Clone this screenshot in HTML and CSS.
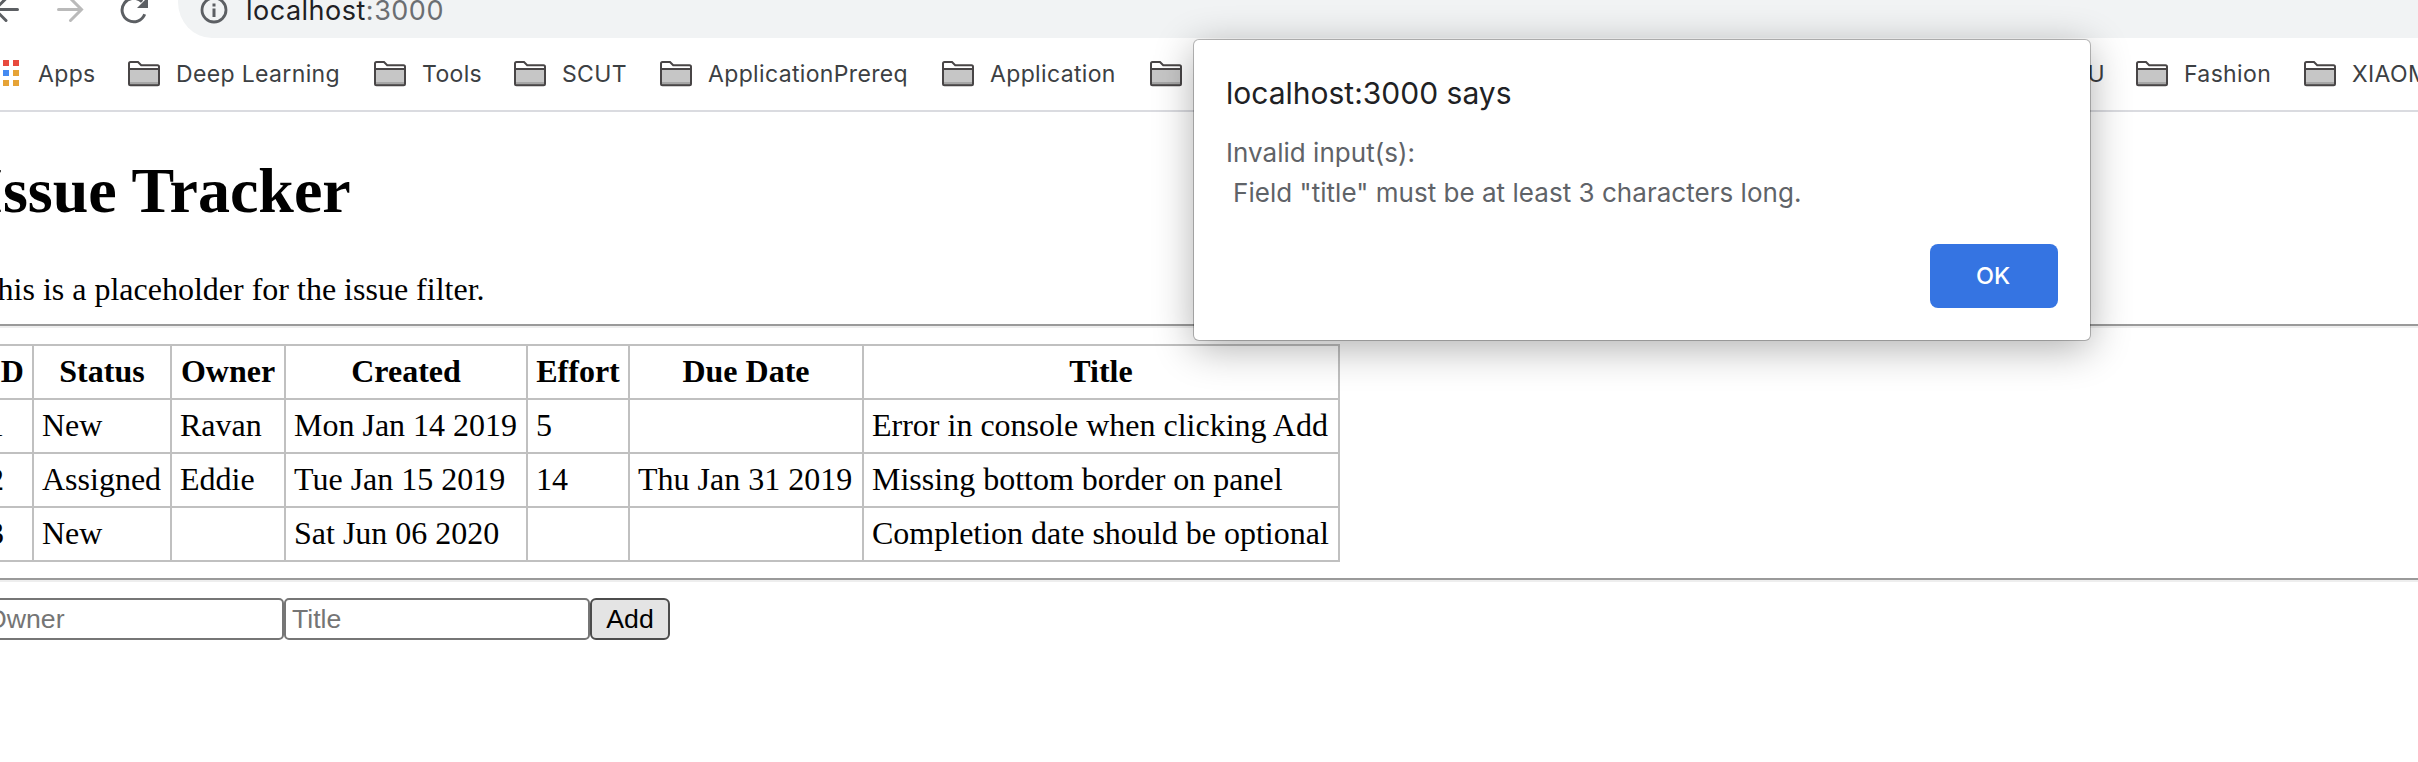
FILE: index.html
```html
<!DOCTYPE html>
<html lang="en">
<head>
<meta charset="utf-8">
<title>Issue Tracker</title>
<link rel="stylesheet" href="styles.css">
</head>
<body>
<svg class="defs" width="0" height="0">
  <symbol id="folder" viewBox="0 0 32 26">
    <path d="M1 24V2.5Q1 1 2.500 1H10.500L14 4.200H29.500Q31 4.200 31 5.700V24Z" fill="#fff"/>
    <path d="M1 8H31V24H1Z" fill="#c6c6c6"/>
    <path d="M1 21H31V24H1Z" fill="#a6a6a6"/>
    <path d="M1 22.700V2.500Q1 1 2.500 1H10L13.200 4.200H29.500Q31 4.200 31 5.700V22.700Q31 24.200 29.500 24.200H2.500Q1 24.200 1 22.700ZM1 8H31" fill="none" stroke="#484546" stroke-width="2"/>
  </symbol>
</svg>
<header class="chrome">
  <div class="toolbar">
    <svg class="nav" width="178" height="38" viewBox="0 0 178 38" fill="none" stroke-width="3" stroke-linecap="round">
      <path d="M17.500 9.500H-5M6 20.500L-5 9.500L6 -1.500" stroke="#5c5f63"/>
      <path d="M58.500 9.500H81M70.500 20.500L81.500 9.500L70.500 -1.500" stroke="#bababa"/>
      <path d="M144.700 14.300A11.700 11.700 0 1 1 142 1.700" stroke="#5c5f63" stroke-linecap="butt"/>
      <path d="M148 -3V8H137Z" fill="#5c5f63"/>
    </svg>
    <div class="omnibox">
      <svg class="info" width="28" height="28" viewBox="0 0 28 28">
        <circle cx="14" cy="14" r="12" fill="none" stroke="#5c5f63" stroke-width="2.800"/>
        <path d="M12.500 12.500H15.500V21H12.500ZM12.500 7.500H15.500V10.500H12.500Z" fill="#5c5f63"/>
      </svg>
      <span class="url">localhost<span class="port">:3000</span></span>
    </div>
  </div>
  <nav class="bookmarks">
    <a class="apps">
      <svg width="19" height="26" viewBox="0 0 19 26">
        <path d="M3 0h6v6h-6zM13 0h6v6h-6z" fill="#e84a3e"/>
        <path d="M3 10h6v6h-6z" fill="#448af2"/>
        <path d="M13 10h6v6h-6zM3 20h6v6h-6zM13 20h6v6h-6z" fill="#e6a336"/>
      </svg>
      <span>Apps</span>
    </a>
    <a class="mark"><svg class="folder"><use href="#folder"/></svg><span>Deep Learning</span></a>
    <a class="mark"><svg class="folder"><use href="#folder"/></svg><span>Tools</span></a>
    <a class="mark"><svg class="folder"><use href="#folder"/></svg><span>SCUT</span></a>
    <a class="mark"><svg class="folder"><use href="#folder"/></svg><span>ApplicationPrereq</span></a>
    <a class="mark"><svg class="folder"><use href="#folder"/></svg><span>Application</span></a>
    <a class="mark"><svg class="folder"><use href="#folder"/></svg></a>
    <a class="mark tail"><span>U</span></a>
    <a class="mark"><svg class="folder"><use href="#folder"/></svg><span>Fashion</span></a>
    <a class="mark"><svg class="folder"><use href="#folder"/></svg><span>XIAOMI</span></a>
  </nav>
</header>
<main class="page">
  <h1 class="title">Issue Tracker</h1>
  <div class="filter">This is a placeholder for the issue filter.</div>
  <hr class="rule">
  <table class="issues">
    <colgroup><col class="c-id"><col class="c-status"><col class="c-owner"><col class="c-created"><col class="c-effort"><col class="c-due"><col class="c-title"></colgroup>
    <thead><tr><th>ID</th><th>Status</th><th>Owner</th><th>Created</th><th>Effort</th><th>Due Date</th><th>Title</th></tr></thead>
    <tbody>
      <tr><td>1</td><td>New</td><td>Ravan</td><td>Mon Jan 14 2019</td><td>5</td><td></td><td>Error in console when clicking Add</td></tr>
      <tr><td>2</td><td>Assigned</td><td>Eddie</td><td>Tue Jan 15 2019</td><td>14</td><td>Thu Jan 31 2019</td><td>Missing bottom border on panel</td></tr>
      <tr><td>3</td><td>New</td><td></td><td>Sat Jun 06 2020</td><td></td><td></td><td>Completion date should be optional</td></tr>
    </tbody>
  </table>
  <hr class="rule">
  <form class="add">
    <input class="field" type="text" placeholder="Owner">
    <input class="field" type="text" placeholder="Title">
    <button class="submit" type="button">Add</button>
  </form>
</main>
<div class="dialog" role="alertdialog">
  <div class="heading">localhost:3000 says</div>
  <div class="message"><div class="line1">Invalid input(s):</div><div class="line2">Field "title" must be at least 3 characters long.</div></div>
  <button class="ok" type="button">OK</button>
</div>
</body>
</html>
```
FILE: styles.css
```css
* { box-sizing: border-box; }
body {
  margin: 0;
  width: 2418px;
  height: 762px;
  overflow: hidden;
  position: relative;
  background: #fff;
  color: #000;
  font-family: "Liberation Serif", serif;
}
.defs { display: block; }

.chrome { font-family: Inter, "Liberation Sans", sans-serif; }
.toolbar { display: flex; height: 38px; }
.nav { flex: none; }
.omnibox {
  flex: 1;
  display: flex;
  align-items: flex-end;
  gap: 18px;
  padding: 0 0 13px 22px;
  background: #f1f3f4;
  border-bottom-left-radius: 34px 36px;
}
.info { flex: none; margin-bottom: 1px; }
.url { font-size: 27px; line-height: 32px; letter-spacing: .5px; margin-bottom: -2px; color: #202124; white-space: nowrap; }
.port { color: #6b6e72; }

.bookmarks {
  display: grid;
  grid-template-columns: 128px 246px 140px 146px 282px 208px 500px 486px 168px 114px;
  height: 74px;
  padding-top: 22px;
  border-bottom: 2px solid #dadbe0;
}
.apps, .mark {
  display: flex;
  height: 26px;
  font-size: 23px;
  line-height: 28px;
  letter-spacing: .35px;
  color: #3c4043;
  white-space: nowrap;
}
.apps { gap: 19px; }
.mark { gap: 16px; }
.tail { justify-content: flex-end; padding-right: 31px; }
.folder { flex: none; width: 32px; height: 26px; margin-top: 1px; }

.page { margin: 0 0 0 -38px; padding: 0 0 0 16px; width: 2474px; }
.title { margin: 42px 0 43px; font-size: 64px; line-height: 74px; font-weight: bold; }
.filter { font-size: 32px; line-height: 36px; padding-bottom: 1px; }
.rule { margin: 16px 0; height: 4px; border: 0; border-top: 2px solid #9a9a9a; border-bottom: 2px solid #eee; }
.issues {
  border-collapse: collapse;
  table-layout: fixed;
  width: 1362px;
  font-size: 32px;
  line-height: 36px;
}
.issues th, .issues td {
  height: 54px;
  padding: 7px 8px 9px;
  border: 2px solid #c0c0c0;
  white-space: nowrap;
}
.issues td { text-align: left; }
.c-id { width: 54px; }
.c-status { width: 138px; }
.c-owner { width: 114px; }
.c-created { width: 242px; }
.c-effort { width: 102px; }
.c-due { width: 234px; }
.c-title { width: 476px; }

.add { display: flex; }
.field, .submit {
  height: 42px;
  font: 26.667px "Liberation Sans", Arial, sans-serif;
}
.field {
  width: 306px;
  margin: 0;
  padding: 2px 6px;
  border: 2px solid #767676;
  border-radius: 5px;
  background: #fff;
}
.field::placeholder { color: #757575; }
.submit {
  width: 80px;
  padding: 0;
  border: 2px solid #4c4c4c;
  border-radius: 6px;
  background: #e4e4e4;
  color: #000;
}

.dialog {
  position: absolute;
  left: 1194px;
  top: 40px;
  width: 896px;
  height: 300px;
  padding: 33px 32px 32px;
  display: flex;
  flex-direction: column;
  border-radius: 5px;
  background: #fff;
  box-shadow: 0 0 0 1px rgba(0, 0, 0, .25), 0 8px 40px rgba(0, 0, 0, .32);
  font-family: Inter, "Liberation Sans", sans-serif;
}
.heading { font-size: 30px; line-height: 40px; color: #202124; }
.message { margin-top: 20px; font-size: 26px; line-height: 40px; letter-spacing: .03px; color: #5f6368; white-space: nowrap; }
.line2 { padding-left: 7px; }
.ok {
  align-self: flex-end;
  margin-top: auto;
  width: 128px;
  height: 64px;
  padding: 0 2px 1px 0;
  border: 0;
  border-radius: 8px;
  background: #3574e2;
  color: #fff;
  font: 500 23.500px Inter, "Liberation Sans", sans-serif;
}
```
